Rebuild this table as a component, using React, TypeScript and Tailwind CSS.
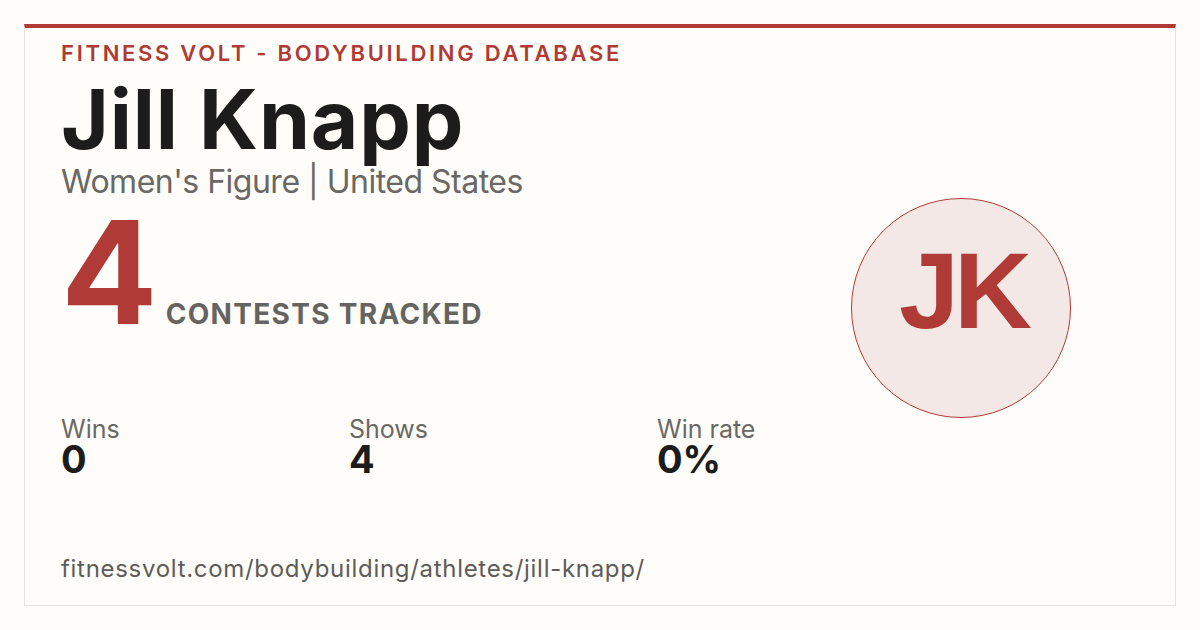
const STATS = [
  { label: "Wins", value: "0", width: "w-[288px]" },
  { label: "Shows", value: "4", width: "w-[308px]" },
  { label: "Win rate", value: "0%", width: "w-auto" },
];

export default function App() {
  return (
    <div className="w-[1200px] h-[630px] bg-[#fdfcf8] p-6 font-['Inter',sans-serif]">
      <div className="flex h-full border border-[#e4e2dc] border-t-4 border-t-[#b03a35] bg-[#fefdf9]">
        <div className="flex flex-1 flex-col pl-9 pt-[14px]">
          <div className="text-[22px] leading-none font-semibold tracking-[2.7px] text-[#b03a35]">
            FITNESS VOLT - BODYBUILDING DATABASE
          </div>
          <h1 className="mt-[15px] text-[82px] leading-none font-bold tracking-[0.01em] text-[#1c1c1c]">Jill Knapp</h1>
          <div className="mt-[5px] text-[32px] leading-none tracking-[-0.5px] text-[#6a6864]">
            Women's Figure | United States
          </div>

          <div className="mt-[2px] flex items-baseline gap-2">
            <span className="text-[143px] leading-none font-bold text-[#b03a35]">4</span>
            <span className="text-[28px] leading-none font-bold tracking-[1.3px] text-[#666460]">CONTESTS TRACKED</span>
          </div>

          <div className="mt-[75px] flex">
            {STATS.map((s) => (
              <div key={s.label} className={s.width}>
                <div className="text-[25px] leading-[22px] text-[#6a6864]">{s.label}</div>
                <div className="mt-[2px] text-[38px] leading-[34px] font-bold text-[#1c1c1c]">{s.value}</div>
              </div>
            ))}
          </div>

          <div className="mt-auto mb-[24px] text-[24px] leading-none tracking-[0.7px] text-[#5e5c58]">
            fitnessvolt.com/bodybuilding/athletes/jill-knapp/
          </div>
        </div>

        <div className="flex items-center pr-[104px] pb-[18px]">
          <div className="flex h-[220px] w-[220px] items-center justify-center rounded-full border-[1.5px] border-[#b03a35] bg-[#f4e8e7]">
            <span className="pb-[34px] pl-[4px] font-['Liberation_Sans',sans-serif] text-[108px] leading-none font-bold tracking-[-5px] text-[#b03a35]">
              JK
            </span>
          </div>
        </div>
      </div>
    </div>
  );
}
